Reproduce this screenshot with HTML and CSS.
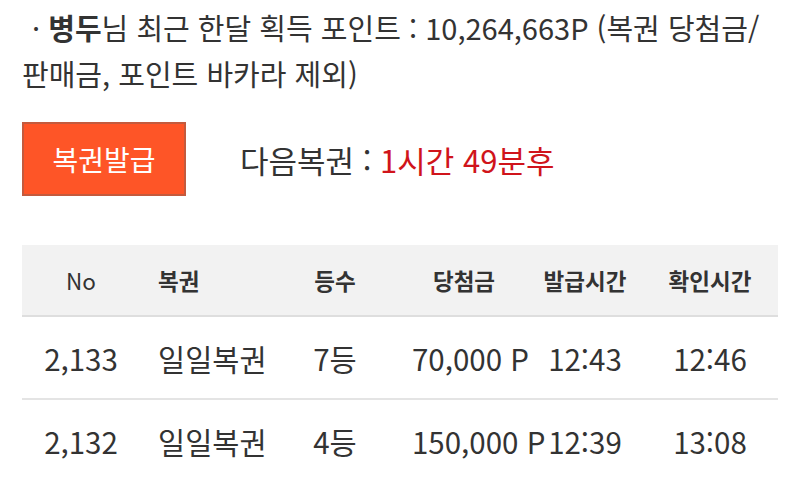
FILE: index.html
```html
<!DOCTYPE html>
<html lang="ko">
<head>
<meta charset="utf-8">
<link rel="stylesheet" href="styles.css">
</head>
<body>
<div class="page">
  <p class="summary"><span class="dot">·</span> <b>병두</b>님 최근 한달 획득 포인트 : 10,264,663P (복권 당첨금/<br>판매금, 포인트 바카라 제외)</p>
  <div class="issue">
    <button class="btn">복권발급</button>
    <div class="next">다음복권 : <span class="red">1시간 49분후</span></div>
  </div>
  <div class="table">
    <div class="row head">
      <div class="c c1 thin">No</div>
      <div class="c c2">복권</div>
      <div class="c c3">등수</div>
      <div class="c c4">당첨금</div>
      <div class="c c5">발급시간</div>
      <div class="c c6">확인시간</div>
    </div>
    <div class="row">
      <div class="c c1">2,133</div>
      <div class="c c2">일일복권</div>
      <div class="c c3">7등</div>
      <div class="c c4">70,000 P</div>
      <div class="c c5">12:43</div>
      <div class="c c6">12:46</div>
    </div>
    <div class="row last">
      <div class="c c1">2,132</div>
      <div class="c c2">일일복권</div>
      <div class="c c3">4등</div>
      <div class="c c4">150,000 P</div>
      <div class="c c5">12:39</div>
      <div class="c c6">13:08</div>
    </div>
  </div>
</div>
</body>
</html>
```
FILE: styles.css
```css
html, body {
  margin: 0;
  padding: 0;
  background: #fff;
}
body {
  font-family: "Noto Sans CJK KR", "Noto Sans", sans-serif;
  color: #333;
}
.page {
  padding: 4px 22px 0 22px;
}
.summary {
  margin: 0;
  font-size: 29px;
  line-height: 46px;
  white-space: nowrap;
}
.summary .dot {
  padding-left: 10px;
}
.summary b {
  font-weight: 700;
}
.issue {
  display: flex;
  align-items: center;
  gap: 54px;
  margin-top: 26px;
}
.btn {
  width: 164px;
  height: 74px;
  background: #fe5527;
  border: 2px solid #c45a3d;
  color: #fff;
  font-family: inherit;
  font-size: 28px;
  padding: 0;
}
.next {
  font-size: 31px;
}
.red {
  color: #d0141b;
}
.table {
  margin-top: 49px;
}
.row {
  display: grid;
  grid-template-columns: 118px 118px 154px 116px 114px 136px;
  height: 81px;
  align-items: center;
  border-bottom: 2px solid #e4e4e4;
  font-size: 29.5px;
  white-space: nowrap;
}
.row.last {
  border-bottom: none;
}
.row.head {
  height: 70px;
  background: #f2f2f2;
  font-size: 22.5px;
  font-weight: 700;
  border-bottom: 2px solid #dedede;
}
.head .thin {
  font-weight: 400;
}
.head .c4 {
  padding-right: 12px;
}
.c {
  text-align: center;
}
.c2 {
  text-align: left;
  padding-left: 18px;
}
```
